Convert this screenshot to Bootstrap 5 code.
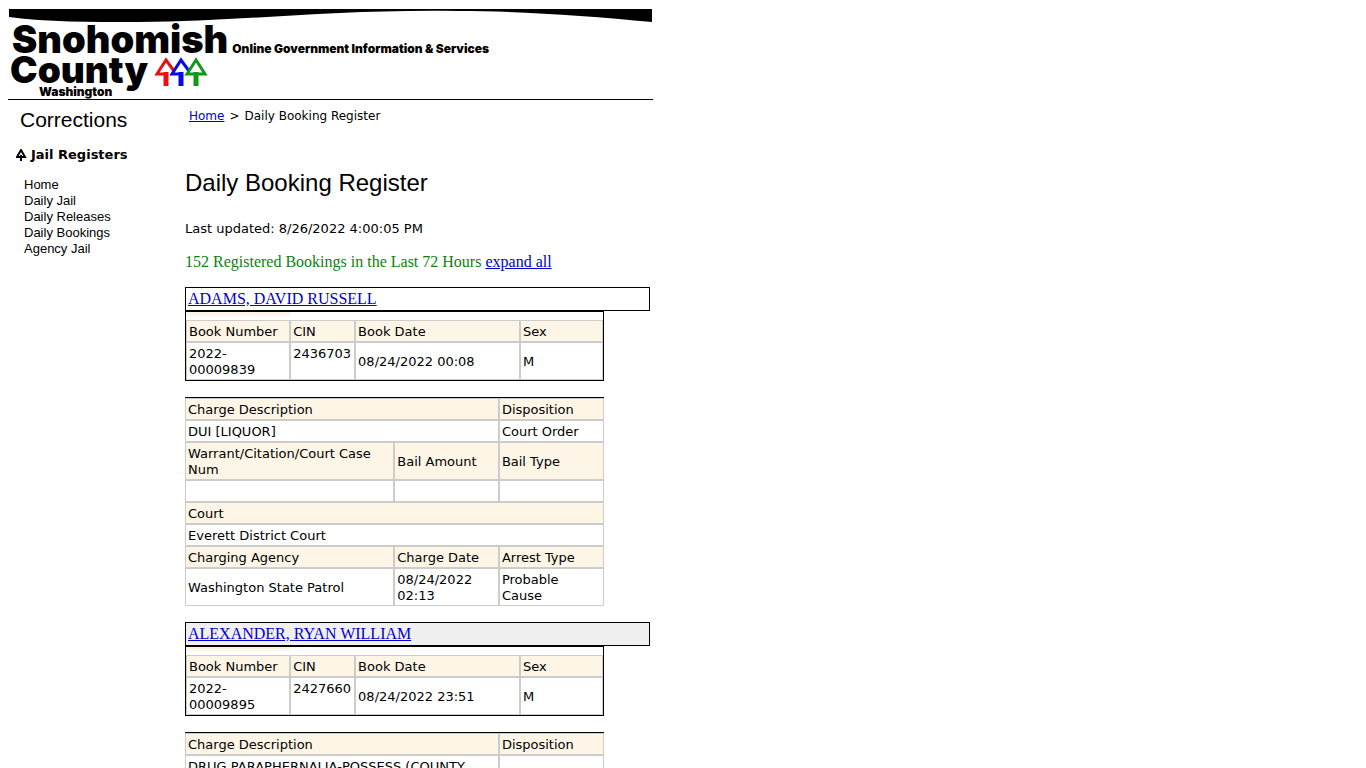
<!DOCTYPE html>
<html lang="en">
<head>
<meta charset="utf-8">
<meta name="viewport" content="width=device-width, initial-scale=1">
<title>Daily Booking Register - Snohomish County Corrections</title>
<link href="https://cdn.jsdelivr.net/npm/bootstrap@5.3.0/dist/css/bootstrap.min.css" rel="stylesheet">
<style>
body { font-family: "DejaVu Sans", Verdana, sans-serif; font-size: 13px; line-height: 16px; color: #000; background: #fff; }
a { color: #00c; }
.site { max-width: 661px; }
.masthead { font-family: Inter, "Arial Black", sans-serif; font-weight: 900; border-bottom: 1px solid #000; padding-top: 1px; }
.swoosh { height: 14px; }
.brand-line { font-size: 38px; line-height: 33px; }
.brand-line.second { font-size: 37px; line-height: 27px; height: 27px; padding-left: 2px; }
.brand-sub { font-size: 12px; line-height: 12px; }
.brand-place { padding: 3px 0 1px 31px; }
.side { width: 177px; }
.side h2, .content h1 { font-family: "Liberation Sans", Arial, sans-serif; font-weight: 400; }
.side h2 { font-size: 21px; line-height: 24px; }
.side h3 { font-size: 13px; line-height: 16px; margin-top: 15px; }
.side ul { font-family: "Liberation Sans", Arial, sans-serif; margin-top: 14px; }
.side ul a { color: #000; text-decoration: none; }
.content { margin-right: 3px; }
.content h1 { font-size: 24px; line-height: 28px; }
.crumbs { font-size: 12px; }
.crumbs .breadcrumb { margin-bottom: 45px; }
.crumbs .breadcrumb-item + .breadcrumb-item { padding-left: 5px; }
.crumbs .breadcrumb-item + .breadcrumb-item::before { color: #000; padding-right: 5px; }
.tally, .inmate { font-family: "Liberation Serif", "Times New Roman", serif; font-size: 16px; line-height: 18px; }
.tally { color: #118011; }
.inmate { border: 1px solid #000; padding: 2px; font-weight: 400; }
.inmate.alt { background: #f0f0f0; }
.record { width: 90%; }
.booking { border: 1px solid #000; }
.booking::before { content: ""; display: block; width: 25%; height: 4px; margin-bottom: 4px; background: #fdf5e6; }
.charges { border-top: 1px solid #000; }
.grid-table { width: 100%; table-layout: fixed; border-collapse: separate; border-spacing: 0; }
.grid-table th, .grid-table td { border: 1px solid #ccc; padding: 3px 2px 1px; font-weight: 400; height: 22px; }
.grid-table th { background: #fdf5e6; }
</style>
</head>
<body>
<div class="site p-2">
  <header class="masthead">
    <svg class="swoosh d-block w-100" viewBox="0 0 645 14" preserveAspectRatio="none" aria-hidden="true">
      <path d="M1 0H644V13C580 7 510 2 450 2C330 0 240 12 130 13C80 13 40 13 1 8Z"/>
    </svg>
    <div class="d-flex align-items-baseline brand-line ps-1">
      <span>Snohomish</span><span class="brand-sub ms-1">Online Government Information &amp; Services</span>
    </div>
    <div class="d-flex align-items-center brand-line second">
      <span>County</span>
      <svg class="ms-1" width="60" height="34" viewBox="0 0 60 34" fill="none" stroke-width="3" aria-hidden="true">
        <g stroke="#e81010"><path d="M22 18L14 7L5 21H14"/><path stroke-width="5" d="M14 19V33"/></g>
        <g stroke="#0808e8"><path d="M37 18L29 7L20 21H29"/><path stroke-width="5" d="M29 19V33"/></g>
        <g stroke="#109818"><path d="M44 21H35L44 7L53 21H44"/><path stroke-width="5" d="M44 19V33"/></g>
      </svg>
    </div>
    <div class="brand-sub brand-place">Washington</div>
  </header>
  <div class="d-flex">
    <nav class="side flex-shrink-0 pt-2" aria-label="Jail registers">
      <h2 class="mb-0 ms-2 ps-1">Corrections</h2>
      <h3 class="fw-bold d-flex align-items-center mb-0 ms-2">
        <svg class="me-1" width="11" height="12" viewBox="0 0 11 12" fill="none" stroke="#000" stroke-width="2" aria-hidden="true"><path d="M5 12V6M5 1L9 8H1Z"/></svg>Jail Registers
      </h3>
      <ul class="list-unstyled ms-3 mb-0">
        <li><a href="#">Home</a></li>
        <li><a href="#">Daily Jail</a></li>
        <li><a href="#">Daily Releases</a></li>
        <li><a href="#">Daily Bookings</a></li>
        <li><a href="#">Agency Jail</a></li>
      </ul>
    </nav>
    <main class="content flex-grow-1 pt-2">
      <nav class="crumbs ms-1" aria-label="Breadcrumb" style="--bs-breadcrumb-divider: '&gt;'">
        <ol class="breadcrumb">
          <li class="breadcrumb-item"><a href="#">Home</a></li>
          <li class="breadcrumb-item" aria-current="page">Daily Booking Register</li>
        </ol>
      </nav>
      <h1 class="mb-4">Daily Booking Register</h1>
      <p class="mb-3">Last updated: 8/26/2022 4:00:05 PM</p>
      <p class="tally mb-3">152 Registered Bookings in the Last 72 Hours <a href="#">expand all</a></p>

      <section>
        <h2 class="inmate mb-0"><a href="#">ADAMS, DAVID RUSSELL</a></h2>
        <div class="record booking mb-3">
          <table class="grid-table">
            <colgroup><col style="width:25%"><col style="width:15.6%"><col style="width:39.6%"><col></colgroup>
            <tr><th>Book Number</th><th>CIN</th><th>Book Date</th><th>Sex</th></tr>
            <tr><td>2022-<br>00009839</td><td class="align-top">2436703</td><td>08/24/2022 00:08</td><td>M</td></tr>
          </table>
        </div>
        <div class="record charges mb-3">
          <table class="grid-table">
            <colgroup><col style="width:50%"><col style="width:25%"><col></colgroup>
            <tr><th colspan="2">Charge Description</th><th>Disposition</th></tr>
            <tr><td colspan="2">DUI [LIQUOR]</td><td>Court Order</td></tr>
            <tr><th>Warrant/Citation/Court Case Num</th><th>Bail Amount</th><th>Bail Type</th></tr>
            <tr><td></td><td></td><td></td></tr>
            <tr><th colspan="3">Court</th></tr>
            <tr><td colspan="3">Everett District Court</td></tr>
            <tr><th>Charging Agency</th><th>Charge Date</th><th>Arrest Type</th></tr>
            <tr><td>Washington State Patrol</td><td>08/24/2022 02:13</td><td>Probable Cause</td></tr>
          </table>
        </div>
      </section>

      <section>
        <h2 class="inmate alt mb-0"><a href="#">ALEXANDER, RYAN WILLIAM</a></h2>
        <div class="record booking mb-3">
          <table class="grid-table">
            <colgroup><col style="width:25%"><col style="width:15.6%"><col style="width:39.6%"><col></colgroup>
            <tr><th>Book Number</th><th>CIN</th><th>Book Date</th><th>Sex</th></tr>
            <tr><td>2022-<br>00009895</td><td class="align-top">2427660</td><td>08/24/2022 23:51</td><td>M</td></tr>
          </table>
        </div>
        <div class="record charges mb-3">
          <table class="grid-table">
            <colgroup><col style="width:50%"><col style="width:25%"><col></colgroup>
            <tr><th colspan="2">Charge Description</th><th>Disposition</th></tr>
            <tr><td colspan="2">DRUG PARAPHERNALIA-POSSESS (COUNTY</td><td></td></tr>
          </table>
        </div>
      </section>
    </main>
  </div>
</div>
<script src="https://cdn.jsdelivr.net/npm/bootstrap@5.3.0/dist/js/bootstrap.bundle.min.js"></script>
</body>
</html>
